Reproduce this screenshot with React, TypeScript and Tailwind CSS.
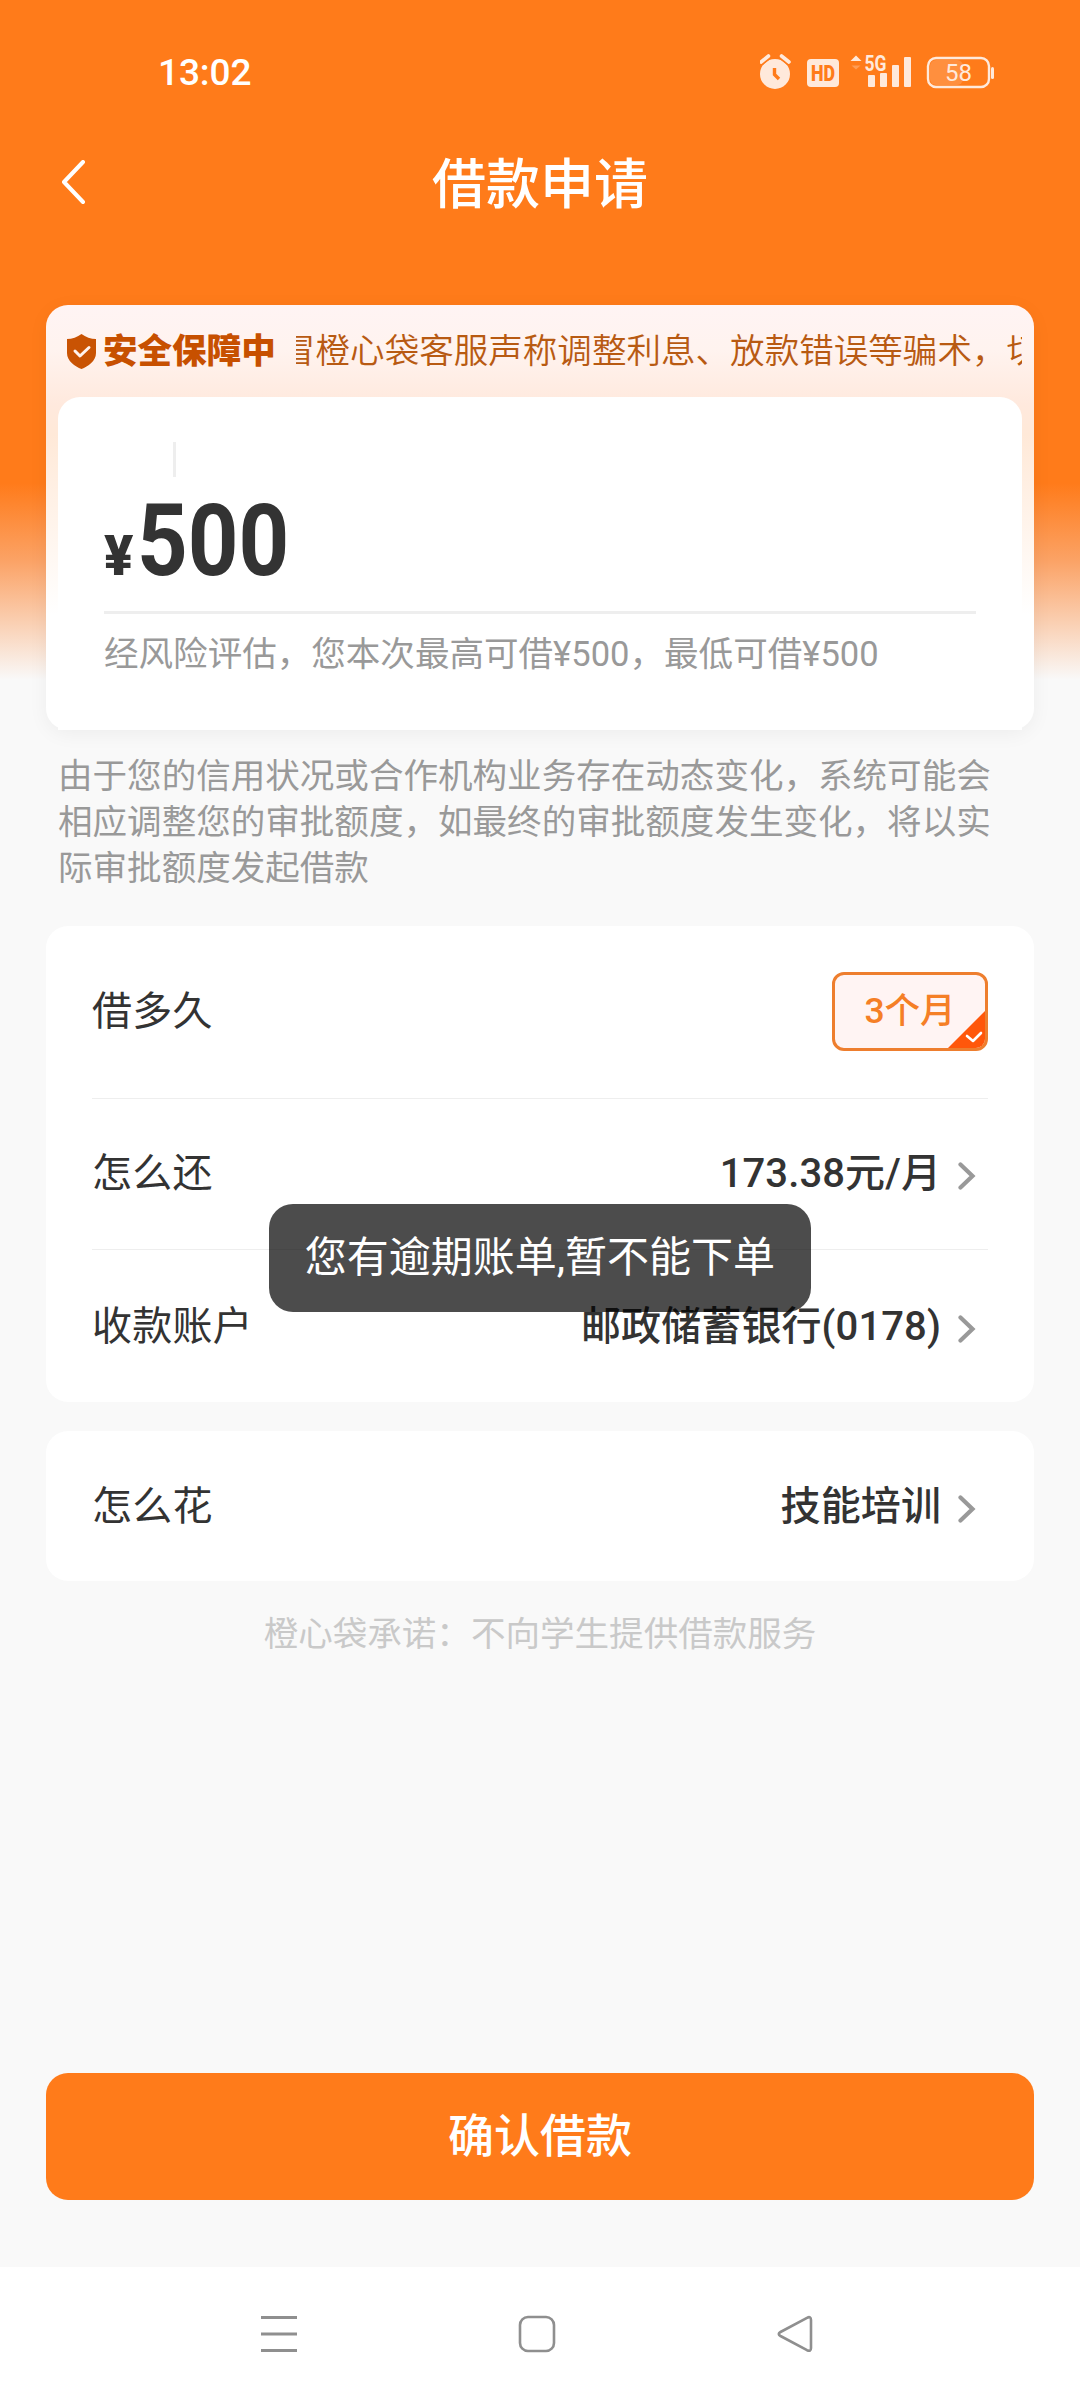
import React from "react";

const Chevron = () => (
  <svg className="block shrink-0" width="18" height="28" viewBox="0 0 18 28" fill="none" stroke="#999" strokeWidth="4.200">
    <path d="M2.5 2.5 14.5 14 2.5 25.5" strokeLinecap="round" strokeLinejoin="miter" />
  </svg>
);

const StatusIcons = () => (
  <svg className="block" width="240" height="38" viewBox="0 0 240 38" fill="#ffe9db">
    {/* alarm clock */}
    <circle cx="15" cy="20" r="15" />
    <path d="M1 8 8.5 2M29 8 21.5 2" stroke="#ff7b1a" strokeWidth="7" />
    <path d="M1 8 8.5 2M29 8 21.5 2" stroke="#ffe9db" strokeWidth="3.6" strokeLinecap="round" />
    <path d="M14.5 14V20.5L19 25" fill="none" stroke="#ff7b1a" strokeWidth="3.4" />
    {/* HD badge */}
    <rect x="47" y="5" width="32" height="28" rx="4" />
    <text x="63" y="27" textAnchor="middle" textLength="24" lengthAdjust="spacingAndGlyphs" fontFamily="Roboto" fontWeight="900" fontSize="22" fill="#ff7b1a">HD</text>
    {/* data arrows and signal */}
    <path d="M90.500 7 96 1.500 101.500 7Z" />
    <path d="M91.500 11.500 96 15.500 100.500 11.500Z" opacity=".3" />
    <text x="104.500" y="17" textLength="22" lengthAdjust="spacingAndGlyphs" fontFamily="Roboto" fontWeight="700" fontSize="21.500">5G</text>
    <rect x="108" y="21" width="7" height="12" rx="1" />
    <rect x="120" y="19" width="7" height="14" rx="1" />
    <rect x="132" y="11" width="7" height="22" rx="1" />
    <rect x="144" y="3" width="7" height="30" rx="1" />
    {/* battery */}
    <rect x="170" y="6" width="33" height="25" rx="6" fill="#ff8f3e" />
    <rect x="168" y="4" width="61" height="29" rx="8" fill="none" stroke="#ffe9db" strokeWidth="2.400" />
    <rect x="231" y="13" width="3" height="12" rx="1.500" />
    <text x="198.500" y="27" textAnchor="middle" fontFamily="Roboto" fontSize="24">58</text>
  </svg>
);

const Row = ({ label, value, className }: { label: string; value: string; className: string }) => (
  <div className={"flex items-center justify-between " + className}>
    <span className="tracking-[0.2px]">{label}</span>
    <div className="flex items-center gap-[17px] pr-[12px]">
      <span className="font-medium tracking-[0.1px]">{value}</span>
      <div className="pt-[3px]"><Chevron /></div>
    </div>
  </div>
);

export default function App() {
  return (
    <div className="relative flex h-[2400px] w-[1080px] flex-col overflow-hidden bg-[#f9f9f9] bg-[linear-gradient(180deg,#ff7b1a_0px,#ff7b1a_483px,#fba265_560px,#f9f9f9_680px)] font-['Roboto','Noto_Sans_CJK_SC',sans-serif] text-[40px] leading-none text-[#333]">
      {/* status bar */}
      <div className="flex h-[120px] items-center justify-between pt-[26px] pr-[80px] pl-[158px] text-white">
        <span className="pb-[2px] text-[37px] font-medium tracking-[-0.1px]">13:02</span>
        <StatusIcons />
      </div>

      {/* title bar */}
      <div className="grid h-[126px] grid-cols-[1fr_auto_1fr] items-center px-[60px] text-white">
        <svg className="block" width="26" height="46" viewBox="0 0 26 46" fill="none" stroke="#fff" strokeWidth="4">
          <path d="M23 2 4 22 23 42" strokeLinecap="round" strokeLinejoin="round" />
        </svg>
        <h1 className="pt-[5px] text-[54px] font-medium">借款申请</h1>
      </div>

      {/* amount card */}
      <section className="mx-[46px] mt-[59px] h-[425px] shrink-0 rounded-[22px] bg-[linear-gradient(180deg,#fff4f4_0px,#fff3ef_45px,#ffe9dd_100px,#ffe9d8_130px,#ffffff_310px)] px-[12px] shadow-[0_4px_20px_rgba(0,0,0,0.05)]">
        <div className="flex h-[92px] items-center pl-[8px] text-[34.560px]">
          <svg className="block shrink-0" width="31" height="35" viewBox="0 0 31 35">
            <path d="M15.500 0C19.500 3 25 5 30 5V19C30 27 22 32.500 15.500 35C9 32.500 1 27 1 19V5C6 5 11.500 3 15.500 0Z" fill="#c95303" />
            <path d="m9 17 5 5 9-8.500" fill="none" stroke="#fff3ee" strokeWidth="3" strokeLinecap="round" strokeLinejoin="round" />
          </svg>
          <span className="ml-[6px] w-[176px] shrink-0 font-black text-[#c75000]">安全保障中</span>
          <div className="ml-[17px] flex-1 overflow-hidden py-[6px] whitespace-nowrap text-[#b85a12]">
            <span className="-ml-[15px] font-[350]">冒橙心袋客服声称调整利息、放款错误等骗术，切</span>
          </div>
        </div>
        <div className="flex h-[333px] flex-col rounded-t-[22px] bg-white px-[46px] pt-[45px]">
          <div className="ml-[69px] h-[35px] w-[3px] bg-[#eee]" />
          <div className="mt-[1px] mb-[7px] flex h-[126px] items-baseline font-bold">
            <span className="w-[33px] origin-left scale-x-[0.97] text-[56px] font-black">¥</span>
            <span className="origin-left scale-x-[0.885] text-[100px] leading-[126px]">500</span>
          </div>
          <div className="h-[3px] bg-[#eee]" />
          <p className="pt-[23px] text-[34.560px] text-[#999]">经风险评估，您本次最高可借¥500，最低可借¥500</p>
        </div>
      </section>

      <p className="mx-[58px] mt-[23px] text-[34.560px] leading-[46px] text-[#999]">
        由于您的信用状况或合作机构业务存在动态变化，系统可能会
        <br />
        相应调整您的审批额度，如最终的审批额度发生变化，将以实
        <br />
        际审批额度发起借款
      </p>

      {/* loan terms */}
      <section className="mx-[46px] mt-[35px] rounded-[22px] bg-white px-[46px]">
        <div className="flex h-[173px] items-center justify-between border-b border-[#eee]">
          <span className="tracking-[0.2px]">借多久</span>
          <div className="relative mb-[2px] flex h-[79px] w-[156px] items-center justify-center overflow-hidden rounded-[12px] border-[3px] border-[#ee7e2e] bg-[#fff4f3] pt-[2px] text-[35.500px] font-medium text-[#f57f26]">
            3个月
            <svg className="absolute right-0 bottom-0" width="37" height="37" viewBox="0 0 37 37">
              <path d="M37 0V37H0Z" fill="#ff570b" />
              <path d="m19 25 6 5 8-8" fill="none" stroke="#fff" strokeWidth="2.600" strokeLinecap="round" strokeLinejoin="round" />
            </svg>
          </div>
        </div>
        <Row label="怎么还" value="173.38元/月" className="h-[151px] border-b border-[#eee]" />
        <Row label="收款账户" value="邮政储蓄银行(0178)" className="h-[152px] pt-[2px]" />
      </section>

      <section className="mx-[46px] mt-[29px] rounded-[22px] bg-white px-[46px]">
        <Row label="怎么花" value="技能培训" className="h-[150px] pt-[2px]" />
      </section>

      <p className="mt-[36px] text-center text-[34.560px] text-[#c9c9c9]">橙心袋承诺：不向学生提供借款服务</p>

      <button className="mx-[46px] mt-auto mb-[67px] h-[127px] shrink-0 rounded-[22px] bg-[#ff7b1a] pb-[2px] text-[46px] font-medium text-white">确认借款</button>

      {/* system navigation */}
      <nav className="flex h-[133px] shrink-0 items-center justify-between bg-white pr-[266px] pl-[260px]">
        <svg className="block" width="38" height="38" viewBox="0 0 38 38" stroke="#8f8f8f" strokeWidth="3">
          <path d="M1 2.500H37M1 19H37M1 35.500H37" />
        </svg>
        <svg className="block" width="38" height="38" viewBox="0 0 38 38" fill="none" stroke="#8f8f8f" strokeWidth="2.600">
          <rect x="2" y="2" width="34" height="34" rx="8" />
        </svg>
        <svg className="block" width="38" height="38" viewBox="0 0 38 38" fill="none" stroke="#8f8f8f" strokeWidth="2.600" strokeLinejoin="round">
          <path d="M31 2.800Q35 .8 35 5V33Q35 37 31 35.200L4.500 21Q1 19 4.500 17Z" />
        </svg>
      </nav>

      {/* toast */}
      <div className="absolute top-[1204px] left-[269px] flex h-[108px] w-[542px] items-center justify-center rounded-[24px] bg-black/70 text-[42px] text-white">
        您有逾期账单,暂不能下单
      </div>
    </div>
  );
}
